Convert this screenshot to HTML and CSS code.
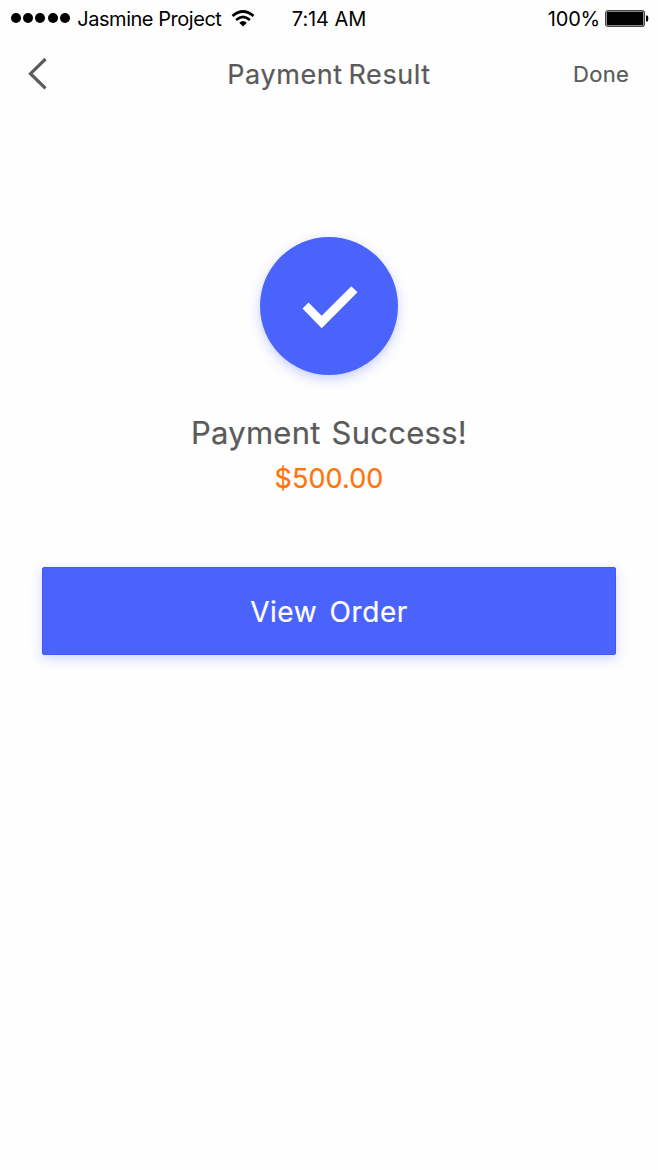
FILE: index.html
```html
<!DOCTYPE html>
<html lang="en">
<head>
<meta charset="utf-8">
<title>Payment Result</title>
<link rel="stylesheet" href="styles.css">
</head>
<body>
<div class="status-bar">
  <div class="status-left">
    <span class="signal"><i></i><i></i><i></i><i></i><i></i></span>
    <span class="carrier">Jasmine Project</span>
    <svg class="wifi" width="24" height="17" viewBox="0 0 24 17" fill="none" stroke="#000" stroke-width="2.7">
      <path d="M1.5 6.1Q12-3.1 22.5 6.1"/>
      <path d="M5.1 9.9Q12 3.7 18.9 9.9"/>
      <path d="M8.2 12.7Q12 9.5 15.8 12.7L12 16.5Z" fill="#000" stroke="none"/>
    </svg>
  </div>
  <span class="time">7:14 AM</span>
  <div class="status-right">
    <span class="percent">100%</span>
    <svg class="battery" width="44" height="18" viewBox="0 0 44 18">
      <rect x=".6" y=".6" width="38.8" height="15.8" rx="2.5" fill="#ddd" stroke="#444" stroke-width="1.2"/>
      <rect x="1.8" y="1.8" width="36.4" height="13.4" rx="1" fill="#000"/>
      <path d="M41 5.5H42.3Q43.3 6 43.3 8.5T42.3 11.5H41Z" fill="#000"/>
    </svg>
  </div>
</div>
<header class="nav">
  <svg class="back" width="22" height="34" viewBox="0 0 22 34" fill="none" stroke="#5a5a5a" stroke-width="3.2">
    <path d="M18.5 2L3.5 16.7L18.5 31.3"/>
  </svg>
  <h1 class="title">Payment Result</h1>
  <a class="done">Done</a>
</header>
<main class="result">
  <div class="badge">
    <svg class="check" width="56" height="43" viewBox="0 0 56 43" fill="#fff">
      <path d="M.5 22.5L6.5 16.5L19.7 29.7L49.3 .3L55.5 6.3L19.7 42.2Z"/>
    </svg>
  </div>
  <p class="message">Payment Success!</p>
  <p class="amount">$500.00</p>
  <button class="view-order">View Order</button>
</main>
</body>
</html>
```
FILE: styles.css
```css
* { box-sizing: border-box; }
body {
  margin: 0;
  min-height: 1170px;
  background: #fefefe;
  color: #5a5a5a;
  font-family: Inter, "Liberation Sans", sans-serif;
}
.status-bar {
  display: grid;
  grid-template-columns: 1fr auto 1fr;
  align-items: center;
  height: 36px;
  padding: 0 9px 0 11px;
  color: #000;
  font-size: 20px;
  line-height: 36px;
}
.status-left, .status-right { display: flex; align-items: center; }
.status-right { justify-content: flex-end; }
.signal { display: flex; gap: 2.2px; margin-bottom: 2px; }
.signal i { width: 10px; height: 10px; border-radius: 50%; background: #000; }
.carrier { margin-left: 7.5px; letter-spacing: -.46px; white-space: nowrap; }
.wifi { margin-left: 9.5px; }
.time { margin-right: 2px; letter-spacing: -.1px; }
.carrier, .time, .percent { padding-top: 1px; }
.percent { letter-spacing: -.2px; }
.battery { margin-left: 5px; }
.nav {
  display: grid;
  grid-template-columns: 1fr auto 1fr;
  align-items: center;
  height: 76px;
  padding: 0 29px 0 27px;
}
.title {
  margin: 0;
  padding: 2px 0 0 2px;
  font-size: 27px;
  font-weight: 400;
  line-height: 36px;
  letter-spacing: .6px;
  word-spacing: -2.5px;
}
.done { justify-self: end; font-size: 22px; line-height: 36px; letter-spacing: .25px; }
.title, .done, .message, .amount { -webkit-text-stroke: .2px currentColor; }
.result { display: flex; flex-direction: column; align-items: center; padding: 125px 42px 0; }
.badge {
  display: flex;
  align-items: center;
  justify-content: center;
  width: 138px;
  height: 138px;
  border-radius: 50%;
  background: #4a63fc;
  box-shadow: 0 4px 12px rgba(74, 99, 252, .3);
}
.check { margin: 3px 0 0 2px; }
.message { margin: 38px 0 0; font-size: 31px; line-height: 40px; letter-spacing: .25px; word-spacing: 2px; }
.amount { margin: 8px 0 0; color: #ff7409; font-size: 27px; line-height: 36px; letter-spacing: .1px; }
.view-order {
  width: 100%;
  height: 88px;
  margin-top: 70px;
  padding: 1px 0 0;
  border: 1px solid #4059fa;
  border-radius: 2px;
  background: #4a63fc;
  box-shadow: 0 4px 12px rgba(74, 99, 252, .25);
  color: #fff;
  font: 400 28px/86px Inter, "Liberation Sans", sans-serif;
  letter-spacing: .55px;
  word-spacing: 4px;
  -webkit-text-stroke: .2px currentColor;
}
```
